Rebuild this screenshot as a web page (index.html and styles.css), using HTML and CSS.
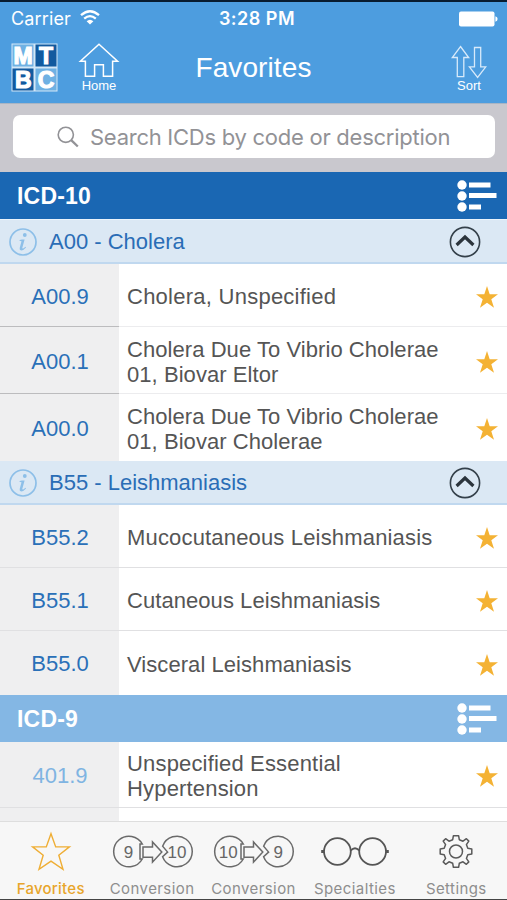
FILE: index.html
```html
<!DOCTYPE html>
<html lang="en">
<head>
<meta charset="utf-8">
<title>Favorites</title>
<link rel="stylesheet" href="styles.css">
</head>
<body>
<svg class="defs" width="0" height="0" aria-hidden="true">
  <symbol id="star" viewBox="0 0 22 22"><path d="M11 0 13.7 8.2H22L15.3 13.2 18 21.8 11 16.7 4 21.8 6.7 13.2 0 8.2H8.3Z"/></symbol>
  <symbol id="up" viewBox="0 0 32 32"><circle cx="16" cy="16" r="14.6" fill="none" stroke="#34404a" stroke-width="1.6"/><path d="M7.6 19 16 11 24.4 19" fill="none" stroke="#2b343c" stroke-width="3.2"/></symbol>
  <symbol id="info" viewBox="0 0 28 28"><circle cx="14" cy="14" r="13" fill="none" stroke="#8dbfe8" stroke-width="1.7"/><circle cx="15.8" cy="7" r="1.9" fill="#8dbfe8"/><path d="M10.6 12 13 11.5H15.6L13.2 20.3 14.2 20.6 16.6 18.8 17 19.4Q14.4 22.4 12.2 22.4 10.2 22.2 10.7 20L12.5 13.2 10.5 12.8Z" fill="#8dbfe8"/></symbol>
  <symbol id="list" viewBox="0 0 40 32"><circle cx="5" cy="5" r="4.7"/><circle cx="5" cy="16" r="4.7"/><circle cx="5" cy="27" r="4.7"/><path d="M12 2.5H33.5V7.5H12ZM12 13H39.5V18H12ZM12 24.5H24V29.5H12Z"/></symbol>
</svg>
<div class="screen">
  <header class="top">
    <div class="status">
      <div class="carrier"><span>Carrier</span>
        <svg width="20" height="15" viewBox="0 0 20 15" fill="none" stroke="#fff" stroke-width="2.3"><path d="M1 5.2Q10-2.8 19 5.2M4.2 8.6Q10 3.6 15.8 8.6"/><path d="M6.6 11.2Q10 8.2 13.4 11.2L10 14.6Z" fill="#fff" stroke="none"/></svg>
      </div>
      <span class="time">3:28 PM</span>
      <svg class="battery" width="39" height="16" viewBox="0 0 39 16" fill="#fff"><rect x="0" y=".5" width="35.5" height="15" rx="2"/><path d="M36.4 5.2Q38.6 6 38.6 8T36.4 10.8Z"/></svg>
    </div>
    <div class="nav">
      <div class="left">
        <svg width="47" height="49" viewBox="0 0 47 49" class="logo">
          <rect x=".5" y=".5" width="46" height="48" fill="#d3e7f7"/>
          <rect x="1.5" y="1.5" width="21" height="22" fill="#6fb1e3"/><rect x="24.5" y="1.5" width="21" height="22" fill="#125a9f"/>
          <rect x="1.5" y="25.5" width="21" height="22" fill="#125a9f"/><rect x="24.5" y="25.5" width="21" height="22" fill="#6fb1e3"/>
          <text x="12" y="20.6">M</text><text x="35" y="20.6">T</text><text x="12.2" y="44.6">B</text><text x="35" y="44.6">C</text>
        </svg>
        <div class="navbtn home">
          <svg width="42" height="35" viewBox="0 0 42 35" fill="none" stroke="#fff" stroke-width="1.5"><path d="M21 1.3 39.6 18.3H34.6V33.3H25.4V21.8H16.6V33.3H7.4V18.3H2.4Z"/></svg>
          <span>Home</span>
        </div>
      </div>
      <h1>Favorites</h1>
      <div class="navbtn sort">
        <svg width="36" height="34" viewBox="0 0 36 34" fill="none" stroke="#d8eafa" stroke-width="1.3"><path d="M9.5 1.5 17.7 12.5H12.8V31.6H6.3V12.5H1.3ZM23.5 2.5H29.7V21.8H34.8L26.6 32.5 18.4 21.8H23.5Z"/></svg>
        <span>Sort</span>
      </div>
    </div>
  </header>
  <div class="search"><div class="field">
    <svg width="22" height="22" viewBox="0 0 22 22" fill="none" stroke="#929296"><circle cx="8.8" cy="8.8" r="7.6" stroke-width="1.6"/><path d="M14.2 14.2 20.8 20.5" stroke-width="2.3"/></svg>
    <span>Search ICDs by code or description</span></div></div>

  <div class="section dark"><h2>ICD-10</h2><svg width="40" height="32"><use href="#list"/></svg></div>
  <div class="group"><svg width="28" height="28"><use href="#info"/></svg><span>A00 - Cholera</span><svg class="up" width="32" height="32"><use href="#up"/></svg></div>
  <div class="row split wide"><b>A00.9</b><p>Cholera, Unspecified</p><svg class="star"><use href="#star"/></svg></div>
  <div class="row split tall"><b>A00.1</b><p>Cholera Due To Vibrio Cholerae<br>01, Biovar Eltor</p><svg class="star"><use href="#star"/></svg></div>
  <div class="row tall last"><b>A00.0</b><p>Cholera Due To Vibrio Cholerae<br>01, Biovar Cholerae</p><svg class="star"><use href="#star"/></svg></div>
  <div class="group second"><svg width="28" height="28"><use href="#info"/></svg><span>B55 - Leishmaniasis</span><svg class="up" width="32" height="32"><use href="#up"/></svg></div>
  <div class="row mid"><b>B55.2</b><p>Mucocutaneous Leishmaniasis</p><svg class="star"><use href="#star"/></svg></div>
  <div class="row"><b>B55.1</b><p>Cutaneous Leishmaniasis</p><svg class="star"><use href="#star"/></svg></div>
  <div class="row last"><b>B55.0</b><p>Visceral Leishmaniasis</p><svg class="star"><use href="#star"/></svg></div>
  <div class="section light"><h2>ICD-9</h2><svg width="40" height="32"><use href="#list"/></svg></div>
  <div class="row tall nine mid"><b>401.9</b><p>Unspecified Essential<br>Hypertension</p><svg class="star"><use href="#star"/></svg></div>
  <div class="row stub"><b></b></div>

  <nav class="tabs">
    <div class="tab on"><svg width="42" height="40" viewBox="0 0 42 40" fill="none" stroke="#efae35" stroke-width="1.4"><path d="M21 2.2 25.7 15.4H39.4L28.8 23.8 33 37.8 21 29.7 9 37.8 13.2 23.8 2.6 15.4H16.3Z"/></svg><span>Favorites</span></div>
    <div class="tab"><svg class="conv" width="82" height="34" viewBox="0 0 82 34"><path d="M30.3 24.5A15.3 15.3 0 1 1 30.3 9.5H28V24.5ZM31 12.5H40.5V7.5L49.8 17.6 40.5 27.7V22.8H31ZM50.6 11.7A15.3 15.3 0 1 1 50.6 22.3L55.6 17.6Z"/><text x="16.5" y="23">9</text><text x="65" y="23">10</text></svg><span>Conversion</span></div>
    <div class="tab"><svg class="conv" width="82" height="34" viewBox="0 0 82 34"><path d="M30.3 24.5A15.3 15.3 0 1 1 30.3 9.5H28V24.5ZM31 12.5H40.5V7.5L49.8 17.6 40.5 27.7V22.8H31ZM50.6 11.7A15.3 15.3 0 1 1 50.6 22.3L55.6 17.6Z"/><text x="15.3" y="23">10</text><text x="65.3" y="23">9</text></svg><span>Conversion</span></div>
    <div class="tab"><svg width="70" height="30" viewBox="0 0 70 30" fill="none" stroke="#555" stroke-width="1.8"><circle cx="17.4" cy="15" r="13.4"/><circle cx="52.6" cy="15" r="13.4"/><path d="M30.8 14Q35 9.5 39.2 14"/><path d="M1.2 15H4.2M65.8 15H68.8" stroke-width="3.2"/></svg><span>Specialties</span></div>
    <div class="tab"><svg width="34" height="34" viewBox="0 0 34 34" fill="none" stroke="#5a5a5a" stroke-width="1.5" stroke-linejoin="round"><circle cx="17" cy="17" r="6.5"/><path d="M14.4 1.2H19.6L20.3 5.2 24 6.7 27.4 4.2 29.8 6.6 27.4 10.1 28.8 13.7 32.8 14.4V19.6L28.8 20.3 27.4 23.9 29.8 27.4 27.4 29.8 24 27.3 20.3 28.8 19.6 32.8H14.4L13.7 28.8 10 27.3 6.6 29.8 4.2 27.4 6.6 23.9 5.2 20.3 1.2 19.6V14.4L5.2 13.7 6.6 10.1 4.2 6.6 6.6 4.2 10 6.7 13.7 5.2Z"/></svg><span>Settings</span></div>
  </nav>
</div>
</body>
</html>
```
FILE: styles.css
```css
* { box-sizing: border-box; margin: 0; }
body { background: #fff; font-family: "Liberation Sans", Arial, sans-serif; }
svg { display: block; flex: none; }
.defs { position: absolute; }
.screen { width: 507px; height: 900px; display: flex; flex-direction: column; overflow: hidden; }
.screen > * { flex: none; }
.top { height: 103px; background: #4d9ddf; border-top: 2px solid #081c30; color: #fff; }
.status { height: 33px; padding: 1px 9px 0 11px; display: grid; grid-template-columns: 1fr auto 1fr; align-items: center; font: 18px/22px Inter, sans-serif; }
.carrier { display: flex; align-items: center; gap: 9px; letter-spacing: .15px; }
.carrier svg { margin-top: -3px; }
.time { font-weight: 600; letter-spacing: .5px; margin-left: 5px; }
.battery { justify-self: end; }
.nav { height: 68px; padding: 8px 20px 0 11px; display: grid; grid-template-columns: 1fr auto 1fr; align-items: start; }
.left { display: flex; gap: 20px; }
.logo text { font: 700 23px "Liberation Sans", sans-serif; fill: #fff; stroke: #fff; stroke-width: 1.2px; text-anchor: middle; }
h1 { font-weight: 400; font-size: 28px; line-height: 32px; letter-spacing: .1px; margin: 9px 0 0 9px; }
.navbtn { display: flex; flex-direction: column; align-items: center; font-size: 13px; line-height: 14px; }
.home span { margin-top: 1px; }
.sort { justify-self: end; padding-top: 2px; }
.search { height: 69px; background: #c9c8ce; padding: 11px 12px 14px 13px; border-top: 1px solid #a9b5c4; }
.field { height: 43px; background: #fff; border-radius: 7px; display: flex; align-items: center; padding-left: 44px; gap: 11px; color: #929296; font: 22px/28px Inter, sans-serif; letter-spacing: -.26px; white-space: nowrap; }
.section { height: 47px; padding: 0 10px 0 17px; display: flex; align-items: center; justify-content: space-between; color: #fff; fill: #fff; }
.section h2 { font-size: 23px; line-height: 26px; letter-spacing: .2px; }
.dark { background: #1a67b3; }
.light { background: #84b7e4; }
.group { height: 45px; background: #dbe8f4; border-bottom: 2px solid #c0d8ef; border-top: 1px solid #ebf4fc; padding: 2px 26px 0 9px; display: flex; align-items: center; font-size: 22px; color: #2a6db6; }
.group.second { height: 44px; border-top: 0; }
.group span { margin-left: 12px; }
.up { margin-left: auto; }
.row { height: 63px; display: flex; align-items: stretch; border-bottom: 1px solid #e0e0e2; color: #555; }
.row b { width: 119px; background: #efeff0; color: #2a70b8; font-weight: 400; font-size: 22px; display: flex; align-items: center; justify-content: center; padding: 3px 0 0 1px; }
.row p { flex: 1; align-self: center; padding: 3px 0 0 8px; font-size: 22px; line-height: 25px; letter-spacing: .06px; white-space: nowrap; }
.row .star { width: 22px; height: 22px; fill: #f4b234; margin: 3px 9px 0 0; align-self: center; }
.row.wide p { letter-spacing: .25px; padding-top: 1px; }
.row.mid p { letter-spacing: .17px; }
.row.split { border-bottom: 0; box-shadow: inset 0 -1px #ececee; }
.row.split b { border-bottom: 1px solid #bcbcbe; }
.row.tall { height: 67px; }
.row.last { border-bottom: 0; }
.row.last:not(.tall) { height: 64px; }
.row.last:not(.tall) b, .row.last:not(.tall) p { padding-top: 2px; }
.row.nine { height: 66px; }
.nine b { color: #7fb4e2; }
.row.stub { height: 13px; border: 0; }
.tabs { height: 79px; background: #f7f7f7; border-top: 1px solid #dedede; border-bottom: 1px solid #444; display: grid; grid-template-columns: repeat(5, 1fr); padding-top: 8px; }
.tab { display: flex; flex-direction: column; align-items: center; justify-content: space-between; height: 69px; font: 400 15px/20px Inter, sans-serif; letter-spacing: .42px; color: #8e8e8e; }
.tab svg { margin: -3px 0 3px; flex: 1; }
.tab.on { color: #e8a52b; font-weight: 500; letter-spacing: .25px; }
.tab .conv { margin-left: 2px; }
.conv path { fill: none; stroke: #6a6a6a; stroke-width: 1.5px; }
.conv text { font: 17px "Liberation Sans", sans-serif; letter-spacing: 0; fill: #666; text-anchor: middle; }
```
